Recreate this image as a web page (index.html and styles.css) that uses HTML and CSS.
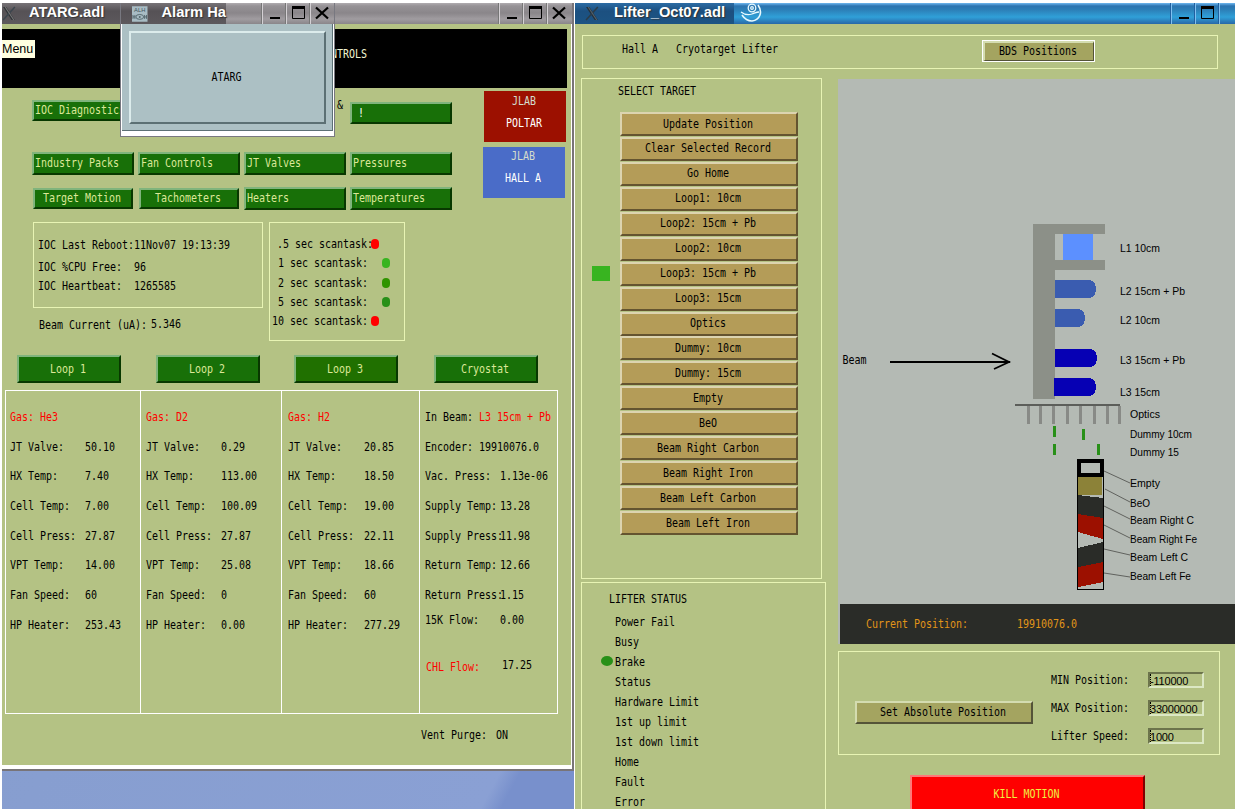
FILE: index.html
```html
<!DOCTYPE html>
<html lang="en">
<head>
<meta charset="utf-8">
<title>Hall A Cryotarget Controls</title>
<link rel="stylesheet" href="styles.css">
</head>
<body>
<div class="desktop">

<section class="window atarg">
  <header class="bar bar-gray">
    <div class="caption">
      <svg class="x" viewBox="0 0 14 14"><path d="M1 1h3l8 12H9z" fill="#303438"/><path d="M12 1 1 13" stroke="#3c464e" stroke-width="1.400"/><path d="M3 1l8 12" stroke="#777" stroke-width="1"/></svg>
      <span class="name">ATARG.adl</span>
    </div>
    <div class="fill"></div>
    <i class="wb"><svg viewBox="0 0 24 21"><path d="M7 15h10" stroke="#000" stroke-width="2"/></svg></i>
    <i class="wb"><svg viewBox="0 0 24 21"><path d="M5.500 4.500h12v11h-12z" fill="none" stroke="#000"/><path d="M5 4.500h13" stroke="#000" stroke-width="3"/></svg></i>
    <i class="wb"><svg viewBox="0 0 24 21"><path d="M5 4.500l12 11M17 4.500l-12 11" stroke="#000" stroke-width="2.200"/></svg></i>
    <div class="end"></div>
  </header>
  <div class="atarg-body">
    <div class="banner"><span class="t">CONTROLS</span></div>
    <div class="top">
      <div class="navs">
        <div class="nav1">
          <button class="btn green diag"><span class="t">IOC Diagnostics</span></button>
          <span class="t amp">&amp;</span>
          <button class="btn green bang"><span class="t">!</span></button>
        </div>
        <div class="nav">
          <button class="btn green"><span class="t">Industry Packs</span></button>
          <button class="btn green"><span class="t">Fan Controls</span></button>
          <button class="btn green"><span class="t">JT Valves</span></button>
          <button class="btn green"><span class="t">Pressures</span></button>
        </div>
        <div class="nav">
          <button class="btn green mid"><span class="t">Target Motion</span></button>
          <button class="btn green mid"><span class="t">Tachometers</span></button>
          <button class="btn green"><span class="t">Heaters</span></button>
          <button class="btn green"><span class="t">Temperatures</span></button>
        </div>
      </div>
      <div class="labs">
        <div class="lab red"><span class="t dim">JLAB</span><span class="t">POLTAR</span></div>
        <div class="lab blue"><span class="t dim">JLAB</span><span class="t">HALL A</span></div>
      </div>
    </div>
    <div class="info">
      <div>
        <div class="box ioc">
          <p><span class="t">IOC Last Reboot:</span><span class="t">11Nov07 19:13:39</span></p>
          <p><span class="t">IOC %CPU Free:</span><span class="t">96</span></p>
          <p><span class="t">IOC Heartbeat:</span><span class="t">1265585</span></p>
        </div>
        <div class="current"><span class="t">Beam Current (uA):</span><span class="t val">5.346</span></div>
      </div>
      <div class="box scans">
        <p class="bad"><span class="t"> .5 sec scantask:</span><i></i></p>
        <p class="ok1"><span class="t"> 1 sec scantask:</span><i></i></p>
        <p class="ok2"><span class="t"> 2 sec scantask:</span><i></i></p>
        <p class="ok3"><span class="t"> 5 sec scantask:</span><i></i></p>
        <p class="bad"><span class="t">10 sec scantask:</span><i></i></p>
      </div>
    </div>
    <div class="loops">
      <button class="btn green mid"><span class="t">Loop 1</span></button>
      <button class="btn green mid"><span class="t">Loop 2</span></button>
      <button class="btn green mid sel"><span class="t">Loop 3</span></button>
      <button class="btn green mid"><span class="t">Cryostat</span></button>
    </div>
    <div class="table">
      <div class="col c1">
        <p class="hot"><span class="t">Gas: He3</span></p>
        <p><span class="t">JT Valve:</span><span class="t">50.10</span></p>
        <p><span class="t">HX Temp:</span><span class="t">7.40</span></p>
        <p><span class="t">Cell Temp:</span><span class="t">7.00</span></p>
        <p><span class="t">Cell Press:</span><span class="t">27.87</span></p>
        <p><span class="t">VPT Temp:</span><span class="t">14.00</span></p>
        <p><span class="t">Fan Speed:</span><span class="t">60</span></p>
        <p><span class="t">HP Heater:</span><span class="t">253.43</span></p>
      </div>
      <div class="col c2">
        <p class="hot"><span class="t">Gas: D2</span></p>
        <p><span class="t">JT Valve:</span><span class="t">0.29</span></p>
        <p><span class="t">HX Temp:</span><span class="t">113.00</span></p>
        <p><span class="t">Cell Temp:</span><span class="t">100.09</span></p>
        <p><span class="t">Cell Press:</span><span class="t">27.87</span></p>
        <p><span class="t">VPT Temp:</span><span class="t">25.08</span></p>
        <p><span class="t">Fan Speed:</span><span class="t">0</span></p>
        <p><span class="t">HP Heater:</span><span class="t">0.00</span></p>
      </div>
      <div class="col c3">
        <p class="hot"><span class="t">Gas: H2</span></p>
        <p><span class="t">JT Valve:</span><span class="t">20.85</span></p>
        <p><span class="t">HX Temp:</span><span class="t">18.50</span></p>
        <p><span class="t">Cell Temp:</span><span class="t">19.00</span></p>
        <p><span class="t">Cell Press:</span><span class="t">22.11</span></p>
        <p><span class="t">VPT Temp:</span><span class="t">18.66</span></p>
        <p><span class="t">Fan Speed:</span><span class="t">60</span></p>
        <p><span class="t">HP Heater:</span><span class="t">277.29</span></p>
      </div>
      <div class="col c4">
        <p class="near"><span class="t">In Beam:</span><span class="t hot">L3 15cm + Pb</span></p>
        <p class="near"><span class="t">Encoder:</span><span class="t">19910076.0</span></p>
        <p><span class="t">Vac. Press:</span><span class="t">1.13e-06</span></p>
        <p><span class="t">Supply Temp:</span><span class="t">13.28</span></p>
        <p><span class="t">Supply Press:</span><span class="t">11.98</span></p>
        <p><span class="t">Return Temp:</span><span class="t">12.66</span></p>
        <p class="last"><span class="t">Return Press:</span><span class="t">1.15</span></p>
        <p class="flow"><span class="t">15K Flow:</span><span class="t">0.00</span></p>
        <p class="chl"><span class="t hot">CHL Flow:</span><span class="t">17.25</span></p>
      </div>
    </div>
    <div class="vent"><span class="t">Vent Purge:</span><span class="t">ON</span></div>
  </div>
  <div class="menu-tip">Menu</div>
</section>

<section class="window lifter">
  <header class="bar bar-blue">
    <div class="caption">
      <svg class="x" viewBox="0 0 14 14"><path d="M1 1h3l8 12H9z" fill="#24303a"/><path d="M12 1 1 13" stroke="#2c3c48" stroke-width="1.400"/><path d="M3 1l8 12" stroke="#55626c" stroke-width="1"/></svg>
      <span class="name">Lifter_Oct07.adl</span>
    </div>
    <svg class="swirl" viewBox="0 0 22 21"><g fill="none" stroke="#e8faff" stroke-width="1.300"><circle cx="12" cy="5" r="3.800"/><circle cx="12" cy="5" r="1.300"/><path d="M1 9c4 3 8 3 11 2s5-2 7-2"/><path d="M18 2c5 7 2 15-6 16-5 0-8-3-10-6" stroke-width="1.600"/></g></svg>
    <div class="fill"></div>
    <i class="wb"><svg viewBox="0 0 24 21"><path d="M7 15h10" stroke="#000" stroke-width="2"/></svg></i>
    <i class="wb"><svg viewBox="0 0 24 21"><path d="M5.500 4.500h12v11h-12z" fill="none" stroke="#000"/><path d="M5 4.500h13" stroke="#000" stroke-width="3"/></svg></i>
    <i class="wb cut"></i>
  </header>
  <div class="lifter-body">
    <div class="box head">
      <span class="t">Hall A   Cryotarget Lifter</span>
      <button class="btn olive mid bds"><span class="t">BDS Positions</span></button>
    </div>
    <div class="cols">
      <div class="side">
        <div class="box select">
          <span class="t title">SELECT TARGET</span>
          <div class="pick">
            <div class="lamp"></div>
            <div class="targets">
              <button class="btn tan mid"><span class="t">Update Position</span></button>
              <button class="btn tan mid"><span class="t">Clear Selected Record</span></button>
              <button class="btn tan mid"><span class="t">Go Home</span></button>
              <button class="btn tan mid"><span class="t">Loop1: 10cm</span></button>
              <button class="btn tan mid"><span class="t">Loop2: 15cm + Pb</span></button>
              <button class="btn tan mid"><span class="t">Loop2: 10cm</span></button>
              <button class="btn tan mid"><span class="t">Loop3: 15cm + Pb</span></button>
              <button class="btn tan mid"><span class="t">Loop3: 15cm</span></button>
              <button class="btn tan mid"><span class="t">Optics</span></button>
              <button class="btn tan mid"><span class="t">Dummy: 10cm</span></button>
              <button class="btn tan mid"><span class="t">Dummy: 15cm</span></button>
              <button class="btn tan mid"><span class="t">Empty</span></button>
              <button class="btn tan mid"><span class="t">BeO</span></button>
              <button class="btn tan mid"><span class="t">Beam Right Carbon</span></button>
              <button class="btn tan mid"><span class="t">Beam Right Iron</span></button>
              <button class="btn tan mid"><span class="t">Beam Left Carbon</span></button>
              <button class="btn tan mid"><span class="t">Beam Left Iron</span></button>
            </div>
          </div>
        </div>
        <div class="box status">
          <span class="t title">LIFTER STATUS</span>
          <p><span class="t">Power Fail</span></p>
          <p><span class="t">Busy</span></p>
          <p><i></i><span class="t">Brake</span></p>
          <p><span class="t">Status</span></p>
          <p><span class="t">Hardware Limit</span></p>
          <p><span class="t">1st up limit</span></p>
          <p><span class="t">1st down limit</span></p>
          <p><span class="t">Home</span></p>
          <p><span class="t">Fault</span></p>
          <p><span class="t">Error</span></p>
        </div>
      </div>
      <div class="view">
        <svg class="diagram" width="397" height="525" viewBox="838 79 397 525">
          <g shape-rendering="crispEdges">
            <path d="M1033 224h72v10h-50v26h50v10h-50v129h-22z" fill="#8c9088"/>
            <rect x="1063" y="234" width="30" height="26" fill="#5c90ff"/>
            <path d="M1055 280h35q6 2 6 9t-6 9h-35z" fill="#3a5cb0"/>
            <path d="M1055 309h24q6 2 6 9t-6 9h-24z" fill="#3a5cb0"/>
            <path d="M1055 349h36q6 2 6 9t-6 9h-36z" fill="#0600b4"/>
            <path d="M1054 378h36q6 2 6 9t-6 9h-36z" fill="#0600b4"/>
            <path d="M1028.500 406v18M1040.500 406v18M1053.500 406v18M1067.500 406v18M1080.500 406v18M1094.500 406v18M1107.500 406v18M1119.500 406v18" stroke="#888a86" stroke-width="3"/>
            <rect x="1015" y="404" width="105" height="2" fill="#5c5e5a"/>
            <path d="M1053 426h3v11h-3zM1082 429h3v11h-3zM1053 444h3v11h-3zM1097 444h3v11h-3z" fill="#289018"/>
            <rect x="890" y="361" width="120" height="2"/>
            <rect x="1079" y="461" width="23" height="14" fill="none" stroke="#000" stroke-width="4"/>
            <rect x="1078" y="477" width="24" height="18" fill="#8c8238"/>
            <path d="M1078 495l25 3v20l-25-4z" fill="#2a2c28"/>
            <path d="M1078 514l25 4v21l-25-7z" fill="#9c1000"/>
            <path d="M1078 548l25-6v20l-25 5z" fill="#2a2c28"/>
            <path d="M1078 567l25-5v20l-25 5z" fill="#9c1000"/>
            <rect x="1077.500" y="459.500" width="26" height="130" fill="none" stroke="#000"/>
          </g>
          <path d="M992 353.500l17 8.500-15 7" fill="none" stroke="#000" stroke-width="1.800"/>
          <path d="M1104 471l26 12M1105 489l25 13M1104 506l26 13M1104 525l26 13M1104 549l26 6M1104 573l26 4" stroke="#60625e" fill="none"/>
          <g class="sans">
            <text x="1120" y="252" textLength="40" lengthAdjust="spacingAndGlyphs">L1 10cm</text>
            <text x="1120" y="295" textLength="65" lengthAdjust="spacingAndGlyphs">L2 15cm + Pb</text>
            <text x="1120" y="324" textLength="40" lengthAdjust="spacingAndGlyphs">L2 10cm</text>
            <text x="1120" y="364" textLength="65" lengthAdjust="spacingAndGlyphs">L3 15cm + Pb</text>
            <text x="1120" y="396" textLength="40" lengthAdjust="spacingAndGlyphs">L3 15cm</text>
            <text x="1130" y="418" textLength="30" lengthAdjust="spacingAndGlyphs">Optics</text>
            <text x="1130" y="438" textLength="62" lengthAdjust="spacingAndGlyphs">Dummy 10cm</text>
            <text x="1130" y="456" textLength="49" lengthAdjust="spacingAndGlyphs">Dummy 15</text>
            <text x="1130" y="487" textLength="30" lengthAdjust="spacingAndGlyphs">Empty</text>
            <text x="1130" y="507" textLength="20" lengthAdjust="spacingAndGlyphs">BeO</text>
            <text x="1130" y="524" textLength="64" lengthAdjust="spacingAndGlyphs">Beam Right C</text>
            <text x="1130" y="543" textLength="67" lengthAdjust="spacingAndGlyphs">Beam Right Fe</text>
            <text x="1130" y="561" textLength="58" lengthAdjust="spacingAndGlyphs">Beam Left C</text>
            <text x="1130" y="580" textLength="61" lengthAdjust="spacingAndGlyphs">Beam Left Fe</text>
          </g>
          <text class="mono" transform="translate(842.500 364) scale(1 1.200)">Beam</text>
        </svg>
        <div class="position"><span class="t">Current Position:</span><span class="t">19910076.0</span></div>
        <div class="box setpos">
          <button class="btn olive mid abs"><span class="t">Set Absolute Position</span></button>
          <div class="fields">
            <p><span class="t">MIN Position:</span><span class="field">-110000</span></p>
            <p><span class="t">MAX Position:</span><span class="field">33000000</span></p>
            <p><span class="t">Lifter Speed:</span><span class="field">1000</span></p>
          </div>
        </div>
        <button class="btn kill mid"><span class="t">KILL MOTION</span></button>
      </div>
    </div>
  </div>
</section>

<section class="window alarm">
  <header class="bar bar-gray">
    <div class="caption">
      <svg class="alh" viewBox="0 0 16 16"><rect width="16" height="16" fill="#a8bcc4"/><text x="8" y="6" text-anchor="middle">ALH</text><path d="M1 9v4M3 9v4M1 11h2M13 9v4M15 9v4M13 11h2" stroke="#55686e"/><ellipse cx="8" cy="11" rx="4" ry="2.500" fill="none" stroke="#55686e"/><circle cx="8" cy="11" r="1" fill="#55686e"/></svg>
      <span class="name">Alarm Ha</span>
    </div>
    <div class="fill"></div>
    <i class="wb"><svg viewBox="0 0 24 21"><path d="M7 15h10" stroke="#000" stroke-width="2"/></svg></i>
    <i class="wb"><svg viewBox="0 0 24 21"><path d="M5.500 4.500h12v11h-12z" fill="none" stroke="#000"/><path d="M5 4.500h13" stroke="#000" stroke-width="3"/></svg></i>
    <i class="wb"><svg viewBox="0 0 24 21"><path d="M5 4.500l12 11M17 4.500l-12 11" stroke="#000" stroke-width="2.200"/></svg></i>
  </header>
  <div class="alarm-body"><button class="btn steel mid"><span class="t">ATARG</span></button></div>
</section>

</div>
</body>
</html>
```
FILE: styles.css
```css
* { box-sizing: border-box; }
html, body { margin: 0; height: 100%; overflow: hidden; background: #fff; }
p { margin: 0; display: flex; }
i { display: block; }
svg { display: block; }

.desktop { position: relative; width: 1235px; height: 809px; overflow: hidden;
  background: linear-gradient(#fff 0 3px, transparent 3px),
    linear-gradient(90deg, #fff 0 2px, transparent 2px),
    linear-gradient(118deg, #849ccc 0, #8aa0d4 804px, #7890cc 822px); }
.window { position: absolute; }

/* Terminal-style text: 6px advance, stretched to the 13px cell */
.t { display: block; flex: none; font: 10px/13px "DejaVu Sans Mono", monospace; letter-spacing: -0.02px;
  white-space: pre; transform: translateY(-0.8px) scaleY(1.22); height: 13px; }
.mid .t { transform: translate(-1px, -0.8px) scaleY(1.22); }
.hot { color: #f00; }
.box { border: 1px solid #e8f4b4; }

/* Title bars */
.bar { display: flex; height: 21px; }
.bar-gray { background: linear-gradient(#b0acb0 0, #969296 3px, #8a868a 10px, #a09ca0 16px, #8a868a 21px); }
.bar-blue { background: linear-gradient(#70b8f0 0, #2c74b0 3px, #2c80b8 7px, #30a0d8 14px, #2868a8 21px); }
.caption { display: flex; align-items: center; }
.name { font: bold 14.700px/19px "Liberation Sans", Arial, sans-serif; color: #fff; white-space: nowrap; text-shadow: 1px 1px 1px #333; padding-bottom: 2px; }
.fill { flex: 1; }
.wb { width: 24px; border-left: 1px solid #d4d0d4; box-shadow: -1px 0 #777; }
.wb svg { width: 24px; height: 21px; }
.bar-blue .wb { border-color: #80c0f0; box-shadow: -1px 0 #2060a0; }
.x { width: 15px; height: 15px; }

/* Buttons */
.btn { display: flex; align-items: center; padding: 0; border: 2px solid; border-radius: 0; margin: 0; font: inherit; }
.btn.mid { justify-content: center; }
.green { background: #187008; color: #dce898; border-color: #80b47c #083800 #083800 #80b47c; padding-left: 1px; }
.green.mid { padding-left: 0; }
.green.sel { background: #207000; }
.tan { background: #b49c58; color: #000; border-color: #dcd4b0 #645430 #645430 #dcd4b0; }
.olive { background: #a4a460; color: #000; border-color: #d4dcb0 #545438 #545438 #d4dcb0; }
.steel { background: #acc0c4; color: #000; border-color: #dcecec #5c7074 #5c7074 #dcecec; }
.kill { background: #f00; color: #f0f040; border-color: #ff7878 #800000 #800000 #ff7878; }

/* ATARG window */
.atarg { left: 2px; top: 3px; width: 572px; height: 768px; border-right: 2px solid #787478; border-bottom: 2px solid #787478; background: #fff; }
.atarg .bar { width: 570px; }
.atarg .caption { width: 118px; background: linear-gradient(#777377, #565256 8px, #5c585c); gap: 12px; }
.atarg .end { width: 1px; }
.atarg-body { width: 569px; height: 741px; background: #b4c284; padding-top: 5px; }
.banner { width: 565px; height: 59px; background: #000; color: #f0f4d0; padding: 19px 0 0 317px; }
.top { display: flex; height: 134px; }
.navs { width: 481px; padding: 12px 0 0 30px; }
.nav1 { display: flex; height: 52px; }
.diag { width: 102px; height: 21px; }
.amp { margin: -1px 0 0 203px; }
.bang { width: 102px; height: 22px; margin: 2px 0 0 7px; padding-left: 6px; color: #fff; }
.nav { display: grid; grid-template-columns: repeat(4, 102px); column-gap: 4px; height: 35px; }
.nav .btn { height: 23px; width: 102px; }
.nav .mid { height: 21px; width: 100px; margin: 1px 0 0 1px; }
.labs { padding-top: 3px; display: flex; flex-direction: column; gap: 5px; }
.lab { width: 82px; height: 51px; display: flex; flex-direction: column; align-items: center; gap: 9px; padding-top: 4px; color: #fff; }
.lab .dim { color: #d4dccc; }
.lab.red { background: #9c1000; margin-left: 1px; }
.lab.blue { background: #4a6cc8; padding-top: 3px; }
.lab .t { transform: translate(-1px, -0.8px) scaleY(1.22); }
.info { display: flex; gap: 6px; padding-left: 31px; height: 133px; }
.ioc { width: 230px; height: 86px; padding: 16px 0 0 4px; }
.ioc p { height: 19px; }
.ioc p:first-child { height: 22px; }
.ioc p .t:first-child { width: 96px; }
.current { display: flex; padding: 11px 0 0 6px; }
.current .t:first-child { width: 112px; }
.current .val { margin-top: -1px; }
.scans { width: 136px; height: 119px; padding: 15px 0 0 2px; }
.scans p { height: 19.300px; align-items: flex-start; }
.scans .t { width: 99px; }
.scans p:first-child .t { margin-left: -1px; width: 100px; }
.scans i { width: 8px; height: 10px; border-radius: 4px; margin: 1px 0 0 11px; background: #289018; }
.scans .bad i { margin-left: 0; background: #f00; }
.scans .ok1 i { background: #38b420; }
.scans .ok2 i { background: #309400; }
.loops { display: flex; padding-left: 15px; height: 35px; gap: 35px; }
.loops .btn { width: 104px; height: 28px; }
.loops .sel { margin: 0 1px 0 -1px; }
.table { display: flex; width: 553px; height: 324px; margin-left: 3px; border: 1px solid #fff; }
.col { border-left: 1px solid #fff; padding-top: 20px; }
.col:first-child { border-left: 0; }
.col p { height: 29.670px; }
.col .t:first-child { width: 75px; }
.c1 { width: 134px; padding-left: 4px; }
.c2 { width: 141px; padding-left: 5px; }
.c3 { width: 138px; padding-left: 6px; }
.c3 .t:first-child { width: 76px; }
.c4 { padding-left: 5px; }
.col .near .t:first-child { width: 54px; }
.col .last { height: 25px; }
.col .flow { height: 45px; }
.col .chl .t:first-child { width: 77px; padding-left: 1px; margin-top: 2px; }
.vent { display: flex; padding: 15px 0 0 419px; }
.vent .t:first-child { width: 75px; }
.menu-tip { position: absolute; left: 0; top: 37px; width: 33px; height: 18px; background: #ffffe0; color: #000; font: 12.500px/18px "Liberation Sans", Arial, sans-serif; }

/* Alarm handler window */
.alarm { left: 120px; top: 3px; width: 215px; height: 134px; border: 1px solid #787880; border-top: 0; background: #fff; }
.alarm .caption { width: 105px; padding-left: 11px; gap: 14px; background: linear-gradient(#777377, #565256 8px, #5c585c); }
.alh { width: 16px; height: 16px; }
.alh text { font: 6px "Liberation Sans", Arial, sans-serif; fill: #40545c; }
.alarm-body { height: 107px; margin: 0 1px; background: #acc0c4; padding: 7px; border-right: 1px solid #5c7074; border-bottom: 1px solid #5c7074; }
.alarm .steel { width: 197px; height: 93px; }

/* Lifter window */
.lifter { left: 574px; top: 3px; width: 661px; height: 806px; border-left: 1px solid #fff; overflow: hidden; }
.lifter .caption { width: 159px; padding-left: 10px; gap: 14px; background: linear-gradient(#2c6ca4, #1c5080 8px, #1c5484); }
.swirl { width: 22px; height: 21px; margin-left: 6px; }
.cut { width: 16px; }
.lifter-body { height: 785px; background: #b4c284; padding-top: 11px; }
.head { display: flex; width: 636px; height: 34px; margin-left: 7px; padding: 4px 0 0 39px; }
.head > .t { margin: 3px 0 0; width: 360px; }
.bds { width: 113px; height: 22px; outline: 1px solid #fff; outline-offset: -1px; border-width: 3px 2px 2px 3px; }
.cols { display: flex; }
.side { width: 263px; padding: 9px 0 0 6px; }
.select { width: 241px; height: 501px; padding-top: 6px; }
.select .title { margin-left: 36px; }
.pick { display: flex; padding-top: 14px; }
.lamp { width: 18px; height: 15px; background: #38b420; margin: 154px 10px 0 10px; }
.targets { display: flex; flex-direction: column; gap: 0.940px; }
.targets .btn { width: 178px; height: 24px; }
.status { width: 245px; height: 240px; margin-top: 3px; padding-top: 10px; }
.status .title { margin: 0 0 10px 27px; }
.status p { height: 20px; padding-left: 33px; }
.status i { width: 12px; height: 10px; border-radius: 50%; background: #289018; margin: 0 2px 0 -14px; }
.view { padding-top: 10px; width: 397px; }
.diagram { background: #b4bab4; }
.sans text { font: 11px "Liberation Sans", Arial, sans-serif; }
.mono { font: 10px "DejaVu Sans Mono", monospace; }
.position { display: flex; height: 40px; background: #2a2c28; border-left: 2px solid #b4bab4; padding: 14px 0 0 26px; color: #e09418; }
.position .t:first-child { width: 151px; }
.setpos { width: 382px; height: 104px; margin-top: 7px; display: flex; padding-left: 16px; }
.abs { width: 178px; height: 23px; margin-top: 49px; }
.fields { padding: 20px 0 0 18px; }
.fields p { height: 28px; }
.fields .t { width: 97px; margin-top: 2px; }
.field { width: 56px; height: 16px; border: 2px solid; border-color: #6c744c #dce8c4 #dce8c4 #6c744c; font: 11px/14px "Liberation Sans", Arial, sans-serif; letter-spacing: -0.200px; color: #000; position: relative; white-space: nowrap; }
.field::before { content: ""; position: absolute; left: 0; top: 0; height: 12px; border-left: 1px dotted #000; }
.kill { width: 235px; height: 38px; margin: 20px 0 0 72px; }
```
